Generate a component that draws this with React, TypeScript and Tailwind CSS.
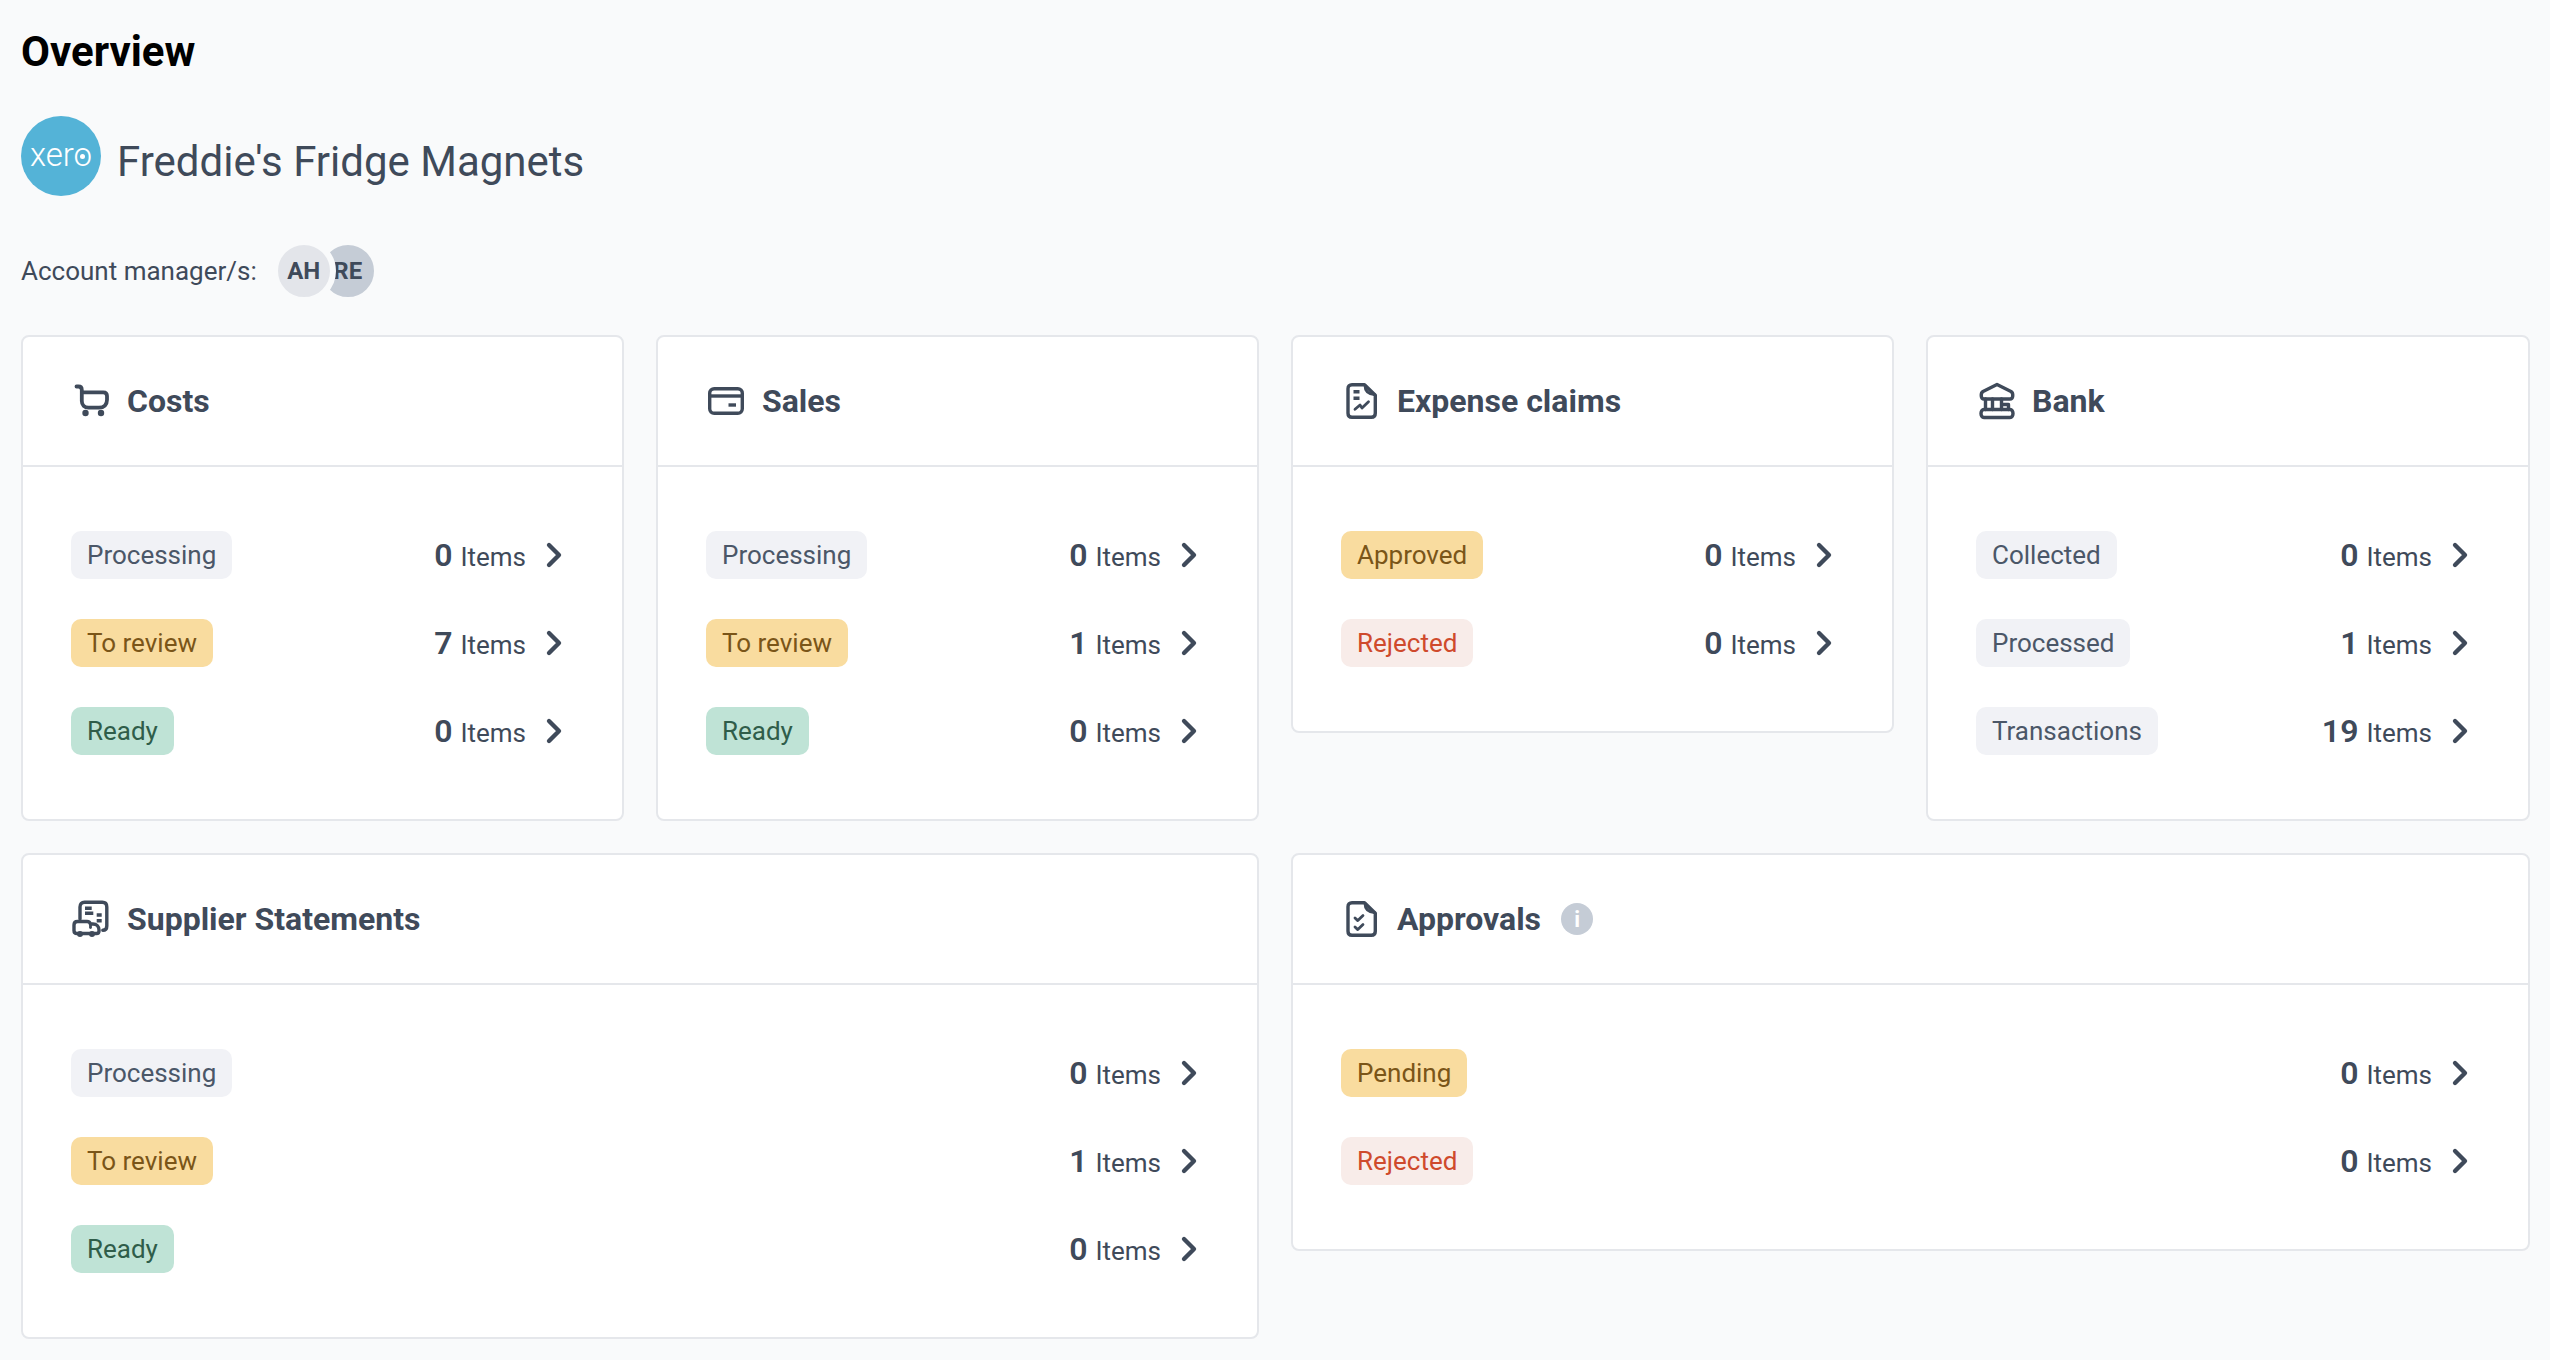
import type { ReactNode } from 'react';
import { ChevronRight } from 'lucide-react';

type Tone = 'grey' | 'amber' | 'green' | 'red';

type Row = { label: string; tone: Tone; count: number };

const toneClasses: Record<Tone, string> = {
  grey: 'bg-[#f1f2f6] text-[#4b5768]',
  amber: 'bg-[#f9dc9f] text-[#7a5518]',
  green: 'bg-[#bfe3d6] text-[#2f5d4a]',
  red: 'bg-[#f8ece9] text-[#cf4a2c]',
};

const Icon = ({ children }: { children: ReactNode }) => (
  <svg
    width="40"
    height="40"
    viewBox="0 0 40 40"
    fill="none"
    stroke="#3f4a5a"
    strokeWidth="3.4"
    strokeLinecap="round"
    strokeLinejoin="round"
    className="shrink-0"
  >
    {children}
  </svg>
);

const CartIcon = () => (
  <Icon>
    <path d="M5.500 5.500h2c2 0 3.300 1.300 3.300 3.500v11c0 4 2.700 6.700 6.700 6.700H28c5 0 8-3 8-8V15c0-2.300-1.500-3.700-3.700-3.700H11" strokeWidth="3.800" />
    <circle cx="14.500" cy="32" r="3.200" fill="#3f4a5a" stroke="none" />
    <circle cx="30" cy="32" r="3.200" fill="#3f4a5a" stroke="none" />
  </Icon>
);

const CardIcon = () => (
  <Icon>
    <rect x="3.700" y="7.700" width="32.600" height="24.600" rx="4.500" />
    <path d="M5 15h31" strokeLinecap="butt" />
    <path d="M22.500 24h7.500" strokeLinecap="butt" />
  </Icon>
);

const ExpenseIcon = () => (
  <Icon>
    <path d="M11 3.700h12.500l10.800 10.500v18c0 2.600-1.500 4.100-4 4.100H11c-2.500 0-4-1.500-4-4.100V7.800c0-2.600 1.500-4.100 4-4.100Z" />
    <path d="M24 4.500c0 5 2.500 8.500 9.500 9" strokeWidth="2.800" />
    <path d="M12.500 10.700h6M12.500 17.300h6" strokeWidth="3.600" strokeLinecap="butt" />
    <path d="m14 28.300 5-4.300 2 3 6.500-6.300" strokeWidth="2.800" />
  </Icon>
);

const BankIcon = () => (
  <Icon>
    <path d="M21 3.500 35 10.500c2.500 1.500 2.500 7.500-1 7.500H8c-3.500 0-3.500-6-1-7.500L21 3.500Z" />
    <path d="M9.500 18v10.500M32.500 24v4.500" />
    <path d="M8 28.500c-4 0-4 8 0 8h26c4 0 4-8 0-8H8Z" />
    <path d="M16.500 18v10.500M25.500 18v10.500M25.500 23.500h7" />
  </Icon>
);

const SupplierIcon = () => (
  <Icon>
    <path d="M9 20V8c0-3 1.700-4.700 4.500-4.700h17.800c2.800 0 4.500 1.700 4.500 4.700v19c0 2.800-1.500 4.300-4 4.300" />
    <path d="M14 9.300h6.700M14 14.300h8.300M25.700 16h5M25.700 21.700h5" strokeLinecap="butt" />
    <path d="M6.500 22.500H16c2 0 3 1 3.300 2.500H22c3.500 0 6 2.500 6 6v1c0 1.500-1 2.500-2.500 2.500H6c-2 0-3-1-3-3V26c0-2.200 1.300-3.500 3.500-3.500Z" fill="#fff" />
    <path d="M19.500 25.500v3" strokeWidth="2.800" />
    <circle cx="9" cy="35" r="3" fill="#3f4a5a" stroke="none" />
    <circle cx="21" cy="35" r="3" fill="#3f4a5a" stroke="none" />
  </Icon>
);

const ApprovalIcon = () => (
  <Icon>
    <path d="M11 3.700h12.500l10.800 10.500v18c0 2.600-1.500 4.100-4 4.100H11c-2.500 0-4-1.500-4-4.100V7.800c0-2.600 1.500-4.100 4-4.100Z" />
    <path d="M24 4.500c0 5 2.500 8.500 9.500 9" strokeWidth="2.800" />
    <path d="m14 19 2.800 2.600 5.200-5M14 28l2.800 2.600 5.200-5" strokeWidth="2.800" />
  </Icon>
);

const StatCard = ({
  title,
  icon,
  rows,
  info,
  className = '',
}: {
  title: string;
  icon: ReactNode;
  rows: Row[];
  info?: boolean;
  className?: string;
}) => (
  <section className={`rounded-[8px] border-2 border-[#e5e7eb] bg-white ${className}`}>
    <header className="flex h-[130px] items-center gap-4 border-b-2 border-[#e5e7eb] px-12">
      {icon}
      <h2 className="text-[32px] font-bold text-[#3f4a5a]">{title}</h2>
      {info && (
        <span className="ml-1 flex size-8 items-center justify-center rounded-full bg-[#c5ccd6] text-[22px] font-bold text-white">
          i
        </span>
      )}
    </header>
    <div className="flex flex-col gap-10 px-12 pt-16 pb-16">
      {rows.map((row) => (
        <div key={row.label} className="flex items-center justify-between">
          <span className={`flex h-12 items-center rounded-[10px] px-4 text-[26px] ${toneClasses[row.tone]}`}>
            {row.label}
          </span>
          <a className="flex items-center gap-2 text-[#3f4a5a]">
            <span className="flex items-baseline gap-2">
              <span className="text-[32px] font-semibold">{row.count}</span>
              <span className="text-[26px]">Items</span>
            </span>
            <ChevronRight size={40} strokeWidth={2.6} />
          </a>
        </div>
      ))}
    </div>
  </section>
);

const pipeline = (processing: number, review: number, ready: number): Row[] => [
  { label: 'Processing', tone: 'grey', count: processing },
  { label: 'To review', tone: 'amber', count: review },
  { label: 'Ready', tone: 'green', count: ready },
];

const App = () => {
  return (
    <div className="min-h-screen bg-[#f9fafb] pt-[27px] pr-5 pl-[21px] font-['Roboto',sans-serif]">
      <h1 className="text-[42px] leading-[50px] font-bold text-black">Overview</h1>

      <div className="mt-[39px] flex items-center gap-4">
        <div className="relative flex size-20 items-center justify-center rounded-full bg-[#54b3d7]">
          <span className="-translate-y-[2px] text-[33px] leading-none font-light text-white">xero</span>
          <span className="absolute top-[38px] left-[59px] size-[5px] rounded-full bg-white" />
        </div>
        <p className="mt-[10px] text-[42px] text-[#3f4a5a]">Freddie's Fridge Magnets</p>
      </div>

      <div className="mt-[43px] mb-8 flex h-16 items-center">
        <span className="text-[26px] text-[#3f4a5a]">Account manager/s:</span>
        <div className="ml-[15px] flex">
          <span className="z-10 flex size-16 items-center justify-center rounded-full border-[6px] border-[#f9fafb] bg-[#e3e5ea] text-[24px] font-bold text-[#3f4a5a]">
            AH
          </span>
          <span className="-ml-5 flex size-16 items-center justify-center rounded-full border-[6px] border-[#f9fafb] bg-[#c5ccd6] text-[24px] font-bold text-[#3f4a5a]">
            RE
          </span>
        </div>
      </div>

      <div className="grid grid-cols-[603px_603px_603px_604px] items-start gap-8">
        <StatCard title="Costs" icon={<CartIcon />} rows={pipeline(0, 7, 0)} />
        <StatCard title="Sales" icon={<CardIcon />} rows={pipeline(0, 1, 0)} />
        <StatCard
          title="Expense claims"
          icon={<ExpenseIcon />}
          rows={[
            { label: 'Approved', tone: 'amber', count: 0 },
            { label: 'Rejected', tone: 'red', count: 0 },
          ]}
        />
        <StatCard
          title="Bank"
          icon={<BankIcon />}
          rows={[
            { label: 'Collected', tone: 'grey', count: 0 },
            { label: 'Processed', tone: 'grey', count: 1 },
            { label: 'Transactions', tone: 'grey', count: 19 },
          ]}
        />
        <StatCard
          className="col-span-2"
          title="Supplier Statements"
          icon={<SupplierIcon />}
          rows={pipeline(0, 1, 0)}
        />
        <StatCard
          className="col-span-2"
          title="Approvals"
          icon={<ApprovalIcon />}
          info
          rows={[
            { label: 'Pending', tone: 'amber', count: 0 },
            { label: 'Rejected', tone: 'red', count: 0 },
          ]}
        />
      </div>
    </div>
  );
};

export default App;
